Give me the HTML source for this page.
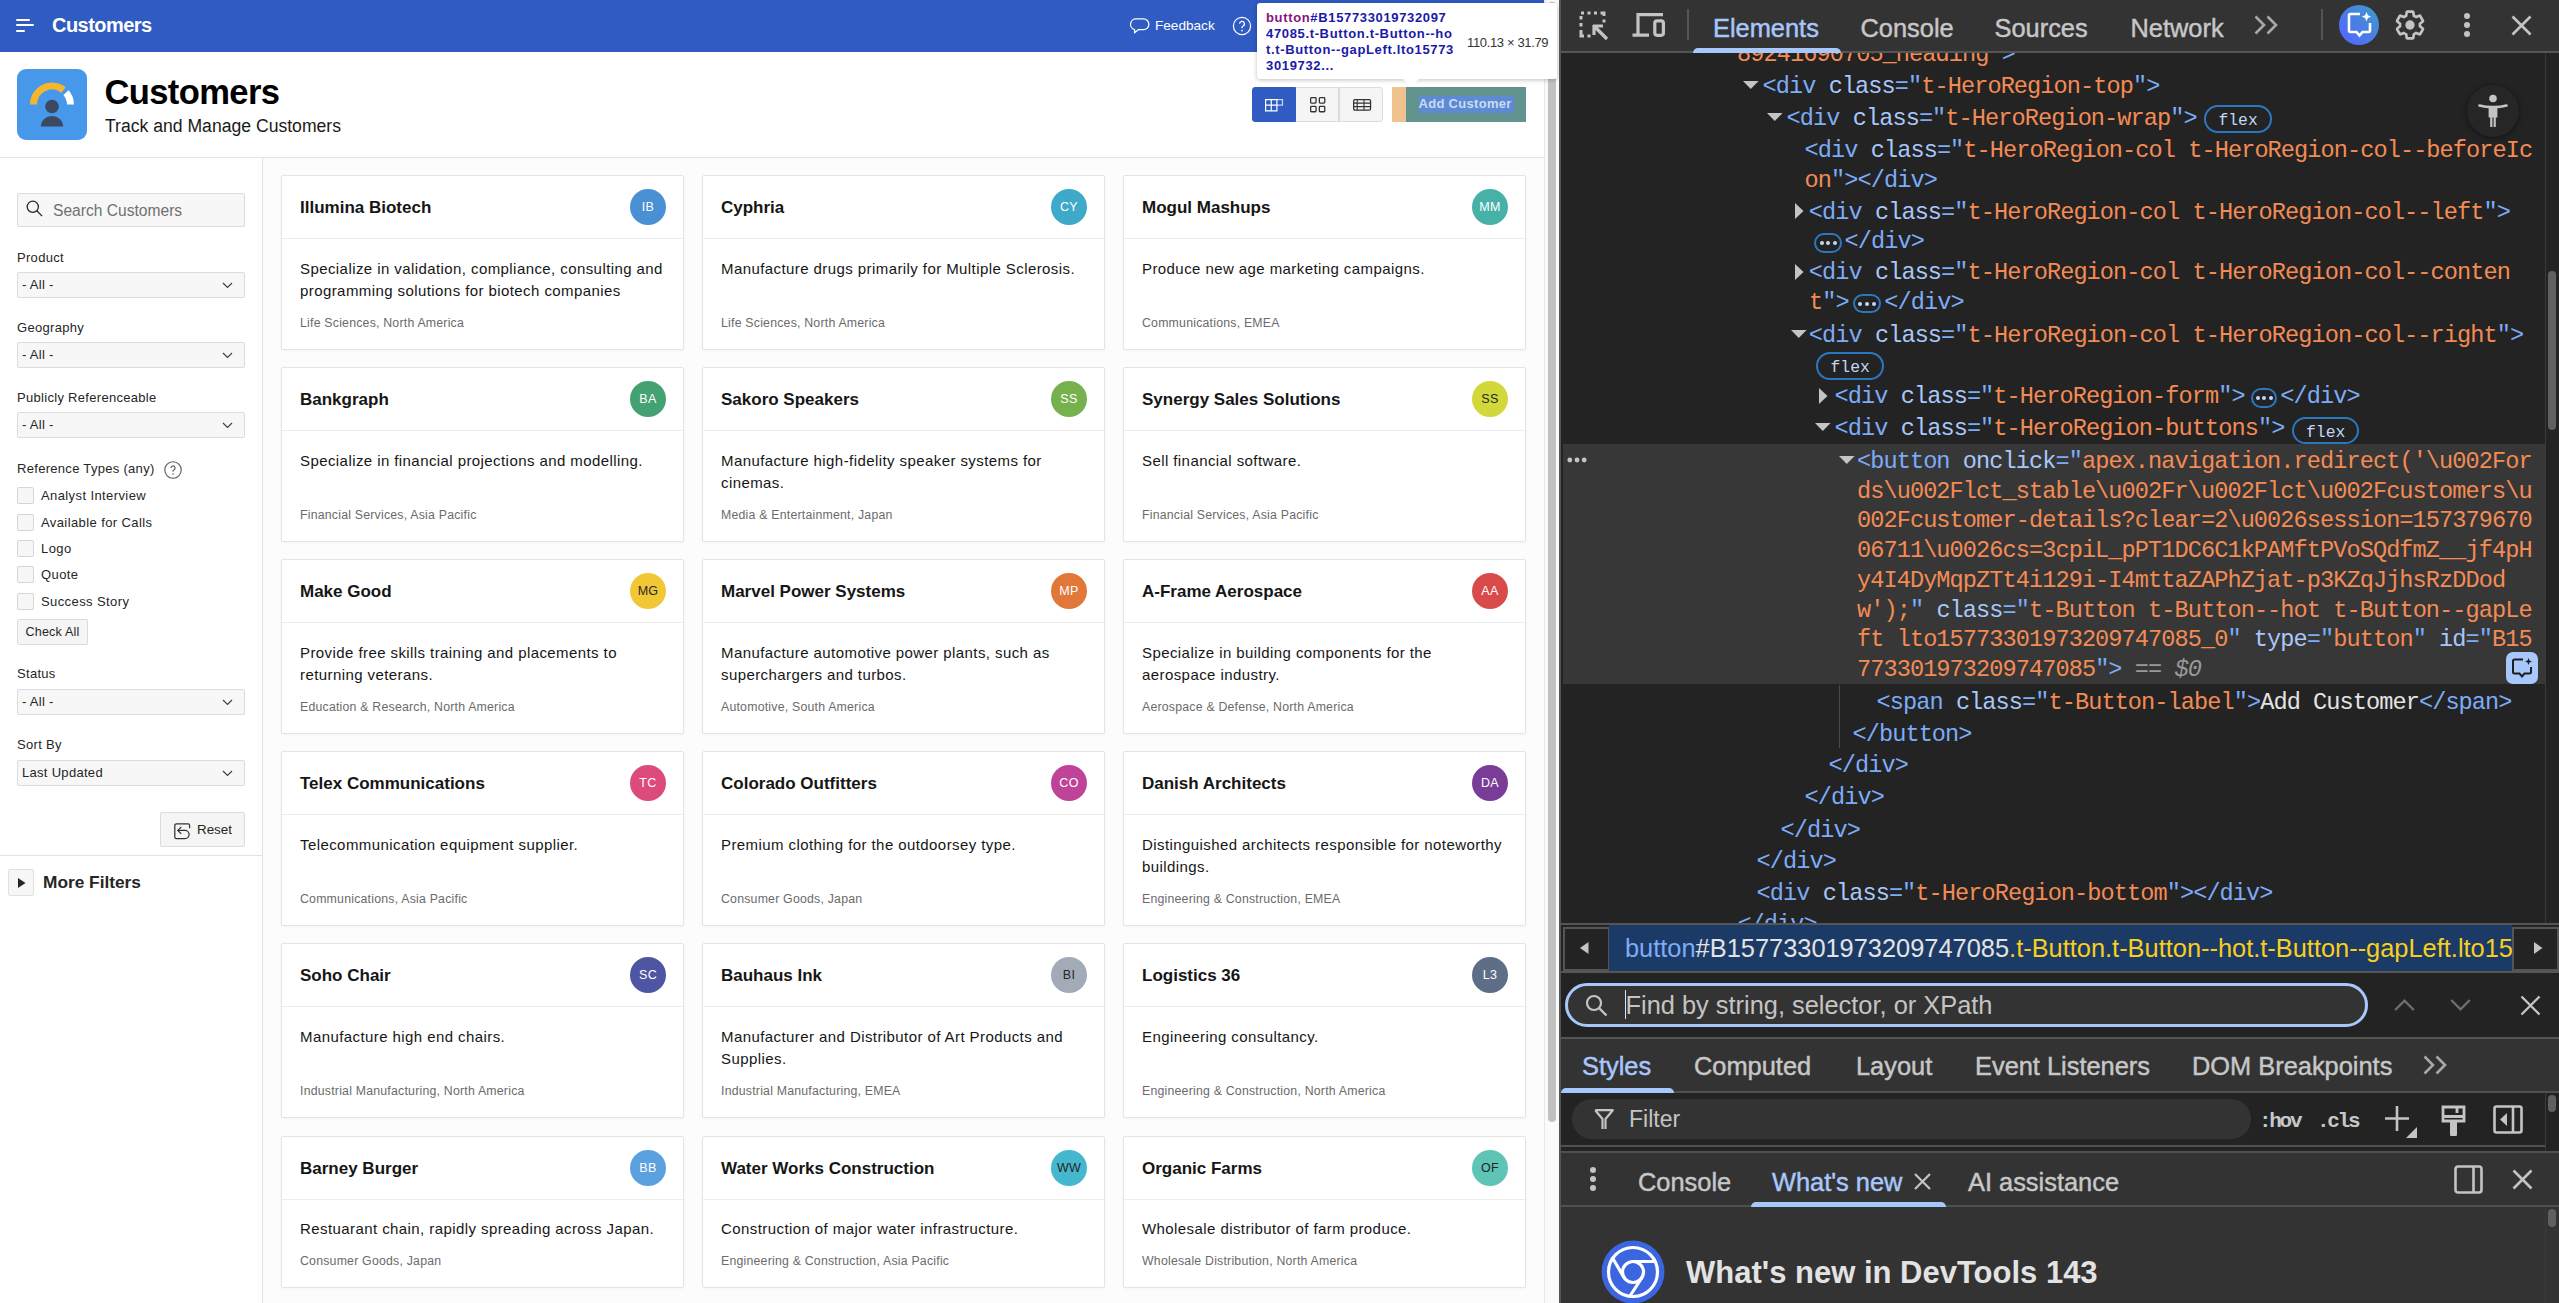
<!DOCTYPE html>
<html><head><meta charset="utf-8"><title>Customers</title>
<style>
*{box-sizing:border-box;margin:0;padding:0}
html,body{width:2559px;height:1303px;overflow:hidden;background:#fff;font-family:"Liberation Sans",sans-serif}

#page{position:absolute;left:0;top:0;width:1559px;height:1303px;overflow:hidden;background:#fff}
#hdr{position:absolute;left:0;top:0;width:1544px;height:52px;background:#2f5bc2;box-shadow:0 1px 0 #2a51ad,0 2px 3px rgba(0,0,0,.06)}
.hb{position:absolute;height:2.2px;background:#fff;border-radius:1.2px}
#htitle{position:absolute;left:52px;top:14px;font-size:20px;font-weight:700;color:#fff;line-height:22px;letter-spacing:-.55px}
#hfb{position:absolute;left:1155px;top:18px;font-size:13.6px;color:#fff;line-height:16px}
#hero{position:absolute;left:0;top:52px;width:1544px;height:106px;background:#fff;border-bottom:1px solid #e2e2e2}
#appicon{position:absolute;left:17px;top:17px;width:70px;height:71px}
#htl{position:absolute;left:104.5px;top:21px;font-size:34.6px;font-weight:700;color:#000;line-height:38px;letter-spacing:-.65px}
#hsub{position:absolute;left:105px;top:64.4px;font-size:17.6px;color:#1a1a1a;line-height:20px}
.vb{position:absolute;top:35px;height:34.5px;background:#f5f5f5;border:1px solid #dcdcdc}
#addc{position:absolute;left:1392px;top:35px;width:134px;height:34.5px}
#addm{position:absolute;left:0;top:0;width:14px;height:34.5px;background:#f0c38e}
#addp{position:absolute;left:14px;top:0;width:120px;height:34.5px;background:#62948f}
#addt{position:absolute;left:12.5px;top:9px;width:95px;height:16.5px;background:#5d8ad2;color:#c9dcf2;font-weight:700;font-size:13px;line-height:16.5px;letter-spacing:.3px;white-space:nowrap}
#tip{position:absolute;left:1257px;top:3px;width:300px;height:76px;background:#fff;border-radius:3px;box-shadow:0 1px 4px rgba(0,0,0,.25)}
#tipt{position:absolute;left:9px;top:7px;font-size:13px;font-weight:700;color:#1a1aa6;line-height:16px;letter-spacing:.65px;white-space:nowrap}
#tipd{position:absolute;left:210px;top:31.5px;font-size:13px;color:#333;line-height:15px;letter-spacing:-.35px;white-space:nowrap}
#tiparr{position:absolute;left:1401.5px;top:78px}
#side{position:absolute;left:0;top:158px;width:263px;height:1145px;background:#fff;border-right:1px solid #e2e2e2}
#srch{position:absolute;left:17px;top:193px;width:228px;height:34px;background:#f7f7f7;border:1px solid #dcdcdc;border-radius:2px}
#srch span{position:absolute;left:35px;top:8px;font-size:15.6px;color:#707070;line-height:18px}
.lbl{position:absolute;left:17px;font-size:13px;color:#262626;line-height:16px;letter-spacing:.3px;white-space:nowrap}
.sel{position:absolute;left:17px;width:228px;height:25.5px;background:#f7f7f7;border:1px solid #dcdcdc;border-radius:2px}
.sel span{position:absolute;left:4px;top:4px;font-size:13px;color:#262626;line-height:16px;letter-spacing:.3px;white-space:nowrap}
.chev{position:absolute;left:204px;top:9px}
.cbx{position:absolute;left:17px;width:17px;height:17px;background:#f7f7f7;border:1px solid #d6d6d6;border-radius:2px}
.cbl{position:absolute;left:41px;font-size:13px;color:#262626;line-height:16px;letter-spacing:.4px;white-space:nowrap}
#chkall{position:absolute;left:17px;top:619px;width:71px;height:26px;background:#f5f5f5;border:1px solid #dcdcdc;border-radius:2px;font-size:12.5px;color:#262626;line-height:24px;text-align:center;letter-spacing:.2px}
#reset{position:absolute;left:160px;top:812px;width:85px;height:35px;background:#f5f5f5;border:1px solid #dcdcdc;border-radius:2px}
#reset span{position:absolute;left:36px;top:9px;font-size:13.4px;color:#262626;line-height:16px}
#sdiv{position:absolute;left:0;top:855px;width:262px;height:1px;background:#e2e2e2}
#mftog{position:absolute;left:8px;top:869px;width:26px;height:27px;background:#f7f7f7;border:1px solid #e0e0e0;border-radius:2px}
#mft{position:absolute;left:43px;top:872px;font-size:17.3px;font-weight:700;color:#262626;line-height:20px}
#content{position:absolute;left:263px;top:158px;width:1281px;height:1145px;background:#fcfcfc}
.card{position:absolute;width:403px;background:#fff;border:1px solid #e4e4e4;border-radius:2px;box-shadow:0 1px 3px rgba(0,0,0,.035);display:flex;flex-direction:column}
.ch{position:relative;height:63px;border-bottom:1px solid #ececec}
.ct{position:absolute;left:18px;top:21.9px;font-size:17px;font-weight:700;color:#161616;line-height:20px;white-space:nowrap}
.av{position:absolute;left:348px;top:13px;width:36px;height:36px;border-radius:50%;font-size:12.5px;text-align:center;line-height:36px;letter-spacing:.3px}
.cb{flex:1;display:flex;flex-direction:column;padding:18.5px 18px 18px 18px}
.cd{font-size:15px;line-height:22px;color:#161616;letter-spacing:.42px;white-space:nowrap}
.cf{margin-top:auto;padding-top:12.7px;font-size:12.3px;line-height:16px;color:#6b6b6b;letter-spacing:.22px;white-space:nowrap}
#psb{position:absolute;left:1544px;top:0;width:15px;height:1303px;background:#fafafa;border-left:1px solid #e8e8e8}
#psbt{position:absolute;left:3px;top:2px;width:8px;height:1120px;background:#c1c1c1;border-radius:4px}


#dt{position:absolute;left:1559px;top:0;width:1000px;height:1303px;background:#232323;border-left:2px solid #555;overflow:hidden}
#dt .cl,#dt .tri,#dt .flexb,#dt .dotb{position:absolute}
#elp{position:absolute;left:0;top:53px;width:998px;height:870px;background:#232323}
#selrow{position:absolute;left:2px;top:443.8px;width:982px;height:240.6px;background:#373737}
#seldots{position:absolute;left:7px;top:457px;width:30px;height:6px;white-space:nowrap}
#seldots i,.kb i{display:inline-block;width:5.5px;height:5.5px;border-radius:50%;background:#c4c4c4;margin-right:2px}
.kb{position:absolute;width:6px}
.kb i{display:block;margin:0 0 3px 0;width:6px;height:6px}
#guide{position:absolute;left:277.7px;top:685px;width:1.5px;height:62.6px;background:#4a4a4a}
.cl{font-family:"Liberation Mono",monospace;font-size:23.6px;letter-spacing:-.93px;line-height:30px;white-space:pre;height:30px}
.flexb{height:27.6px;width:67.6px;border:2.2px solid #2b78c0;border-radius:14px;color:#c2d7f9;font-family:"Liberation Mono",monospace;font-size:16.4px;line-height:28px;text-align:center}
.dotb{height:19.5px;border:2px solid #2b78c0;border-radius:10px;text-align:center;padding-top:5.8px;white-space:nowrap;line-height:0}
.dotb i{display:inline-block;width:4px;height:4px;border-radius:50%;background:#c2d7f9;margin:0 1.3px;vertical-align:top}
#aismall{position:absolute;left:944.5px;top:651.5px;width:32px;height:32px;background:#a8c7fa;border-radius:7px}
#a11y{position:absolute;left:906px;top:85.4px;width:52px;height:52px;border-radius:50%;background:#262626;box-shadow:0 1px 5px rgba(0,0,0,.5)}
#elsbtrack{position:absolute;left:983.5px;top:53px;width:1px;height:870px;background:#3a3a3a}
#elsb{position:absolute;left:986.5px;top:271px;width:8px;height:159px;background:#606060;border-radius:4px}
#tb{position:absolute;left:0;top:0;width:998px;height:53px;background:#333;border-bottom:2.5px solid #555}
.tsep{position:absolute;top:9px;width:2px;height:31px;background:#555}
.tab{position:absolute;top:12.5px;font-size:25.4px;line-height:30px;color:#c7c7c7;white-space:nowrap;-webkit-text-stroke:.45px currentColor}
.tab.act{color:#a8c7fa}
#tbul{position:absolute;left:132px;top:48px;width:148px;height:5px;background:#a8c7fa;border-radius:5px 5px 0 0}
#aibtn{position:absolute;left:778px;top:5px;width:40px;height:40px;border-radius:50%;background:linear-gradient(45deg,#4f6ef7 20%,#3f9cc4 100%)}
#bc{position:absolute;left:0;top:923px;width:998px;height:50px;background:#232323;border-top:2px solid #555;border-bottom:2px solid #555}
.bcbtn{position:absolute;top:2px;width:47px;height:44px;background:#232323;border:2px solid #555}
#bcsel{position:absolute;left:48px;top:0;width:903px;height:46px;background:#1c3a66;overflow:hidden;white-space:nowrap;font-size:25.4px;line-height:46px;padding-left:16px}
#sb{position:absolute;left:0;top:973px;width:998px;height:66px;background:#232323;border-bottom:2px solid #555}
#sbpill{position:absolute;left:3.5px;top:9.6px;width:803px;height:44.6px;border:3.5px solid #a8c7fa;border-radius:23px;background:#333}
#sbpill span{position:absolute;left:58px;top:4.3px;font-size:25.4px;line-height:30px;color:#c4c4c4;white-space:nowrap}
#caret{position:absolute;left:57px;top:4px;width:1.5px;height:29px;background:#e3e3e3}
#st{position:absolute;left:0;top:1039px;width:998px;height:54px;background:#333;border-bottom:2px solid #505050}
#stul{position:absolute;left:0;top:49px;width:112.5px;height:5px;background:#a8c7fa;border-radius:5px 5px 0 0}
#fb{position:absolute;left:0;top:1093px;width:998px;height:60px;background:#232323}
#fb:before{content:"";position:absolute;left:0;top:51.5px;width:984px;height:2px;background:#505050}
#fb:after{content:"";position:absolute;left:0;top:58px;width:998px;height:2px;background:#505050}
#fpill{position:absolute;left:11px;top:6px;width:679px;height:40px;border-radius:20px;background:#333}
#fpill span{position:absolute;left:57px;top:5px;font-size:23px;line-height:30px;color:#c4c4c4}
.fbt{position:absolute;top:15.5px;font-family:"Liberation Mono",monospace;font-weight:700;font-size:21px;line-height:26px;color:#c7c7c7;letter-spacing:-2.3px}
#fsbtrack{position:absolute;left:983.5px;top:0;width:1px;height:58px;background:#3a3a3a}
#fsb{position:absolute;left:987px;top:1.5px;width:8px;height:17px;background:#606060;border-radius:4px}
#dr{position:absolute;left:0;top:1153px;width:998px;height:54px;background:#333;border-bottom:2px solid #505050}
#drul{position:absolute;left:190px;top:49px;width:195px;height:5px;background:#a8c7fa;border-radius:5px 5px 0 0}
#wn{position:absolute;left:0;top:1207px;width:998px;height:96px;background:#333}
#wnt{position:absolute;left:125px;top:47.8px;font-size:31px;font-weight:700;color:#e3e3e3;line-height:36px;white-space:nowrap}
#wnsbtrack{position:absolute;left:983.5px;top:0;width:1px;height:96px;background:#3a3a3a}
#wnsb{position:absolute;left:987px;top:2px;width:8px;height:18px;background:#606060;border-radius:4px}

</style></head><body>
<div id="page">
<div id="hdr">
<div class="hb" style="left:16px;top:19px;width:14px"></div>
<div class="hb" style="left:16px;top:24px;width:18px"></div>
<div class="hb" style="left:16px;top:30px;width:9px"></div>
<div id="htitle">Customers</div>
<svg style="position:absolute;left:1130px;top:18px" width="20" height="16" viewBox="0 0 20 16"><path d="M6.5 .9h7a5.4 5.4 0 0 1 0 10.8H8.3L4.6 14.8V11.5A5.4 5.4 0 0 1 6.5 .9z" fill="none" stroke="#fff" stroke-width="1.25" stroke-linejoin="round"/></svg>
<div id="hfb">Feedback</div>
<svg style="position:absolute;left:1232px;top:15.5px" width="20" height="20" viewBox="0 0 20 20"><circle cx="10" cy="10" r="8.6" fill="none" stroke="#fff" stroke-width="1.2"/><path d="M7.6 7.8a2.4 2.4 0 1 1 3.4 2.2c-.7.4-1 .8-1 1.6v.6" fill="none" stroke="#fff" stroke-width="1.3"/><circle cx="10" cy="14.6" r=".9" fill="#fff"/></svg>
</div>
<div id="hero">
<div id="appicon"><svg width="70" height="71" viewBox="0 0 70 71">
<rect x="0" y="0" width="70" height="71" rx="9" fill="#4797ea"/>
<path d="M16.5 35.5A18.5 18.5 0 0 1 46.5 21" fill="none" stroke="#f4b72c" stroke-width="7"/>
<path d="M49 23.6A18.5 18.5 0 0 1 53.5 35.5" fill="none" stroke="#fff" stroke-width="7"/>
<circle cx="35" cy="37.5" r="6.8" fill="#3b4a62"/>
<path d="M24 57.5a11 10.5 0 0 1 22 0z" fill="#3b4a62"/>
</svg></div>
<div id="htl">Customers</div>
<div id="hsub">Track and Manage Customers</div>
<div class="vb" style="left:1252px;background:#2f5bc2;border-color:#2f5bc2;border-radius:3px 0 0 3px;width:44px">
<svg width="19" height="13" viewBox="0 0 19 13" style="position:absolute;left:12px;top:11px"><path d="M.6.6h11.3v11.2H.6z M.6 6.2h11.3 M6.25.6v11.2" fill="none" stroke="#fff" stroke-width="1.2"/><path d="M11.9.6h5.6v5.6h-5.6" fill="none" stroke="#fff" stroke-opacity=".75" stroke-width="1.2"/></svg></div>
<div class="vb" style="left:1295.5px;width:43.5px;border-left:none">
<svg width="16" height="16" viewBox="0 0 16 16" style="position:absolute;left:14px;top:9px"><rect x=".65" y=".65" width="5.4" height="5.4" rx=".8" fill="none" stroke="#333" stroke-width="1.3"/><rect x="9.35" y=".65" width="5.4" height="5.4" rx=".8" fill="none" stroke="#333" stroke-width="1.3"/><rect x=".65" y="9.35" width="5.4" height="5.4" rx=".8" fill="none" stroke="#333" stroke-width="1.3"/><rect x="9.35" y="9.35" width="5.4" height="5.4" rx=".8" fill="none" stroke="#333" stroke-width="1.3"/></svg></div>
<div class="vb" style="left:1338.5px;width:44px;border-radius:0 3px 3px 0">
<svg width="19" height="12" viewBox="0 0 19 12" style="position:absolute;left:13.3px;top:11px"><rect x=".65" y=".65" width="16.9" height="10.5" rx="1.3" fill="none" stroke="#333" stroke-width="1.3"/><path d="M.65 4.1h16.9M.65 7.6h16.9M4.2.65v10.5M11 .65v10.5" fill="none" stroke="#333" stroke-width="1.1"/></svg></div>
<div id="addc"><div id="addm"></div><div id="addp"><div id="addt">Add Customer</div></div></div>
</div>
<div id="side"></div>
<div id="srch"><svg width="17" height="17" viewBox="0 0 17 17" style="position:absolute;left:8px;top:6px"><circle cx="6.8" cy="6.8" r="5.6" fill="none" stroke="#262626" stroke-width="1.3"/><path d="M10.8 10.8l5.3 5.3" stroke="#262626" stroke-width="1.3"/></svg><span>Search Customers</span></div>
<div class="lbl" style="top:250px">Product</div>
<div class="sel" style="top:272px"><span>- All -</span><svg class="chev" width="11" height="7" viewBox="0 0 11 7"><path d="M1 1l4.5 4.5L10 1" fill="none" stroke="#404040" stroke-width="1.2"/></svg></div>
<div class="lbl" style="top:320px">Geography</div>
<div class="sel" style="top:342px"><span>- All -</span><svg class="chev" width="11" height="7" viewBox="0 0 11 7"><path d="M1 1l4.5 4.5L10 1" fill="none" stroke="#404040" stroke-width="1.2"/></svg></div>
<div class="lbl" style="top:390px">Publicly Referenceable</div>
<div class="sel" style="top:412px"><span>- All -</span><svg class="chev" width="11" height="7" viewBox="0 0 11 7"><path d="M1 1l4.5 4.5L10 1" fill="none" stroke="#404040" stroke-width="1.2"/></svg></div>
<div class="lbl" style="top:461px">Reference Types (any)</div>
<svg style="position:absolute;left:164px;top:461px" width="18" height="18" viewBox="0 0 18 18"><circle cx="9" cy="9" r="8.2" fill="none" stroke="#555" stroke-width="1.1"/><path d="M6.9 7a2.1 2.1 0 1 1 3 1.9c-.6.3-.9.7-.9 1.3v.6" fill="none" stroke="#555" stroke-width="1.1"/><circle cx="9" cy="12.9" r=".75" fill="#555"/></svg>
<div class="cbx" style="top:487px"></div><div class="cbl" style="top:488px">Analyst Interview</div>
<div class="cbx" style="top:514px"></div><div class="cbl" style="top:515px">Available for Calls</div>
<div class="cbx" style="top:540px"></div><div class="cbl" style="top:541px">Logo</div>
<div class="cbx" style="top:566px"></div><div class="cbl" style="top:567px">Quote</div>
<div class="cbx" style="top:593px"></div><div class="cbl" style="top:594px">Success Story</div>
<div id="chkall">Check All</div>
<div class="lbl" style="top:666px">Status</div>
<div class="sel" style="top:689px"><span>- All -</span><svg class="chev" width="11" height="7" viewBox="0 0 11 7"><path d="M1 1l4.5 4.5L10 1" fill="none" stroke="#404040" stroke-width="1.2"/></svg></div>
<div class="lbl" style="top:737px">Sort By</div>
<div class="sel" style="top:760px"><span>Last Updated</span><svg class="chev" width="11" height="7" viewBox="0 0 11 7"><path d="M1 1l4.5 4.5L10 1" fill="none" stroke="#404040" stroke-width="1.2"/></svg></div>
<div id="reset"><svg width="18" height="18" viewBox="0 0 18 18" style="position:absolute;left:13px;top:10px"><path d="M15.6 5.2V2.4a1.6 1.6 0 0 0-1.6-1.6H2.4A1.6 1.6 0 0 0 .8 2.4v11.6a1.6 1.6 0 0 0 1.6 1.6h8.6a4.1 4.1 0 0 0 0-8.2H4" fill="none" stroke="#333" stroke-width="1.25"/><path d="M7.3 3.9L3.8 7.4l3.5 3.5" fill="none" stroke="#333" stroke-width="1.25"/></svg><span>Reset</span></div>
<div id="sdiv"></div>
<div id="mftog"><svg width="8" height="10" viewBox="0 0 8 10" style="position:absolute;left:9px;top:8px"><path d="M0 0l7.5 5L0 10z" fill="#262626"/></svg></div><div id="mft">More Filters</div>
<div id="content"></div>
<div class="card" style="left:281px;top:175px;height:175px"><div class="ch"><div class="ct">Illumina Biotech</div><div class="av" style="background:#4a90d4;color:#fff">IB</div></div><div class="cb"><div class="cd">Specialize in validation, compliance, consulting and<br>programming solutions for biotech companies</div><div class="cf">Life Sciences, North America</div></div></div>
<div class="card" style="left:702px;top:175px;height:175px"><div class="ch"><div class="ct">Cyphria</div><div class="av" style="background:#3fa9c9;color:#fff">CY</div></div><div class="cb"><div class="cd">Manufacture drugs primarily for Multiple Sclerosis.</div><div class="cf">Life Sciences, North America</div></div></div>
<div class="card" style="left:1123px;top:175px;height:175px"><div class="ch"><div class="ct">Mogul Mashups</div><div class="av" style="background:#47b1a8;color:#fff">MM</div></div><div class="cb"><div class="cd">Produce new age marketing campaigns.</div><div class="cf">Communications, EMEA</div></div></div>
<div class="card" style="left:281px;top:367px;height:175px"><div class="ch"><div class="ct">Bankgraph</div><div class="av" style="background:#44a172;color:#fff">BA</div></div><div class="cb"><div class="cd">Specialize in financial projections and modelling.</div><div class="cf">Financial Services, Asia Pacific</div></div></div>
<div class="card" style="left:702px;top:367px;height:175px"><div class="ch"><div class="ct">Sakoro Speakers</div><div class="av" style="background:#77b14e;color:#fff">SS</div></div><div class="cb"><div class="cd">Manufacture high-fidelity speaker systems for<br>cinemas.</div><div class="cf">Media &amp; Entertainment, Japan</div></div></div>
<div class="card" style="left:1123px;top:367px;height:175px"><div class="ch"><div class="ct">Synergy Sales Solutions</div><div class="av" style="background:#d3d83a;color:#262626">SS</div></div><div class="cb"><div class="cd">Sell financial software.</div><div class="cf">Financial Services, Asia Pacific</div></div></div>
<div class="card" style="left:281px;top:559px;height:175px"><div class="ch"><div class="ct">Make Good</div><div class="av" style="background:#f2c736;color:#262626">MG</div></div><div class="cb"><div class="cd">Provide free skills training and placements to<br>returning veterans.</div><div class="cf">Education &amp; Research, North America</div></div></div>
<div class="card" style="left:702px;top:559px;height:175px"><div class="ch"><div class="ct">Marvel Power Systems</div><div class="av" style="background:#e2773a;color:#fff">MP</div></div><div class="cb"><div class="cd">Manufacture automotive power plants, such as<br>superchargers and turbos.</div><div class="cf">Automotive, South America</div></div></div>
<div class="card" style="left:1123px;top:559px;height:175px"><div class="ch"><div class="ct">A-Frame Aerospace</div><div class="av" style="background:#d94b4b;color:#fff">AA</div></div><div class="cb"><div class="cd">Specialize in building components for the<br>aerospace industry.</div><div class="cf">Aerospace &amp; Defense, North America</div></div></div>
<div class="card" style="left:281px;top:751px;height:175px"><div class="ch"><div class="ct">Telex Communications</div><div class="av" style="background:#dd4a7c;color:#fff">TC</div></div><div class="cb"><div class="cd">Telecommunication equipment supplier.</div><div class="cf">Communications, Asia Pacific</div></div></div>
<div class="card" style="left:702px;top:751px;height:175px"><div class="ch"><div class="ct">Colorado Outfitters</div><div class="av" style="background:#bf4399;color:#fff">CO</div></div><div class="cb"><div class="cd">Premium clothing for the outdoorsey type.</div><div class="cf">Consumer Goods, Japan</div></div></div>
<div class="card" style="left:1123px;top:751px;height:175px"><div class="ch"><div class="ct">Danish Architects</div><div class="av" style="background:#7a3d97;color:#fff">DA</div></div><div class="cb"><div class="cd">Distinguished architects responsible for noteworthy<br>buildings.</div><div class="cf">Engineering &amp; Construction, EMEA</div></div></div>
<div class="card" style="left:281px;top:943px;height:175px"><div class="ch"><div class="ct">Soho Chair</div><div class="av" style="background:#4e55a3;color:#fff">SC</div></div><div class="cb"><div class="cd">Manufacture high end chairs.</div><div class="cf">Industrial Manufacturing, North America</div></div></div>
<div class="card" style="left:702px;top:943px;height:175px"><div class="ch"><div class="ct">Bauhaus Ink</div><div class="av" style="background:#a3abb8;color:#262626">BI</div></div><div class="cb"><div class="cd">Manufacturer and Distributor of Art Products and<br>Supplies.</div><div class="cf">Industrial Manufacturing, EMEA</div></div></div>
<div class="card" style="left:1123px;top:943px;height:175px"><div class="ch"><div class="ct">Logistics 36</div><div class="av" style="background:#5d6e86;color:#fff">L3</div></div><div class="cb"><div class="cd">Engineering consultancy.</div><div class="cf">Engineering &amp; Construction, North America</div></div></div>
<div class="card" style="left:281px;top:1136px;height:152px"><div class="ch"><div class="ct">Barney Burger</div><div class="av" style="background:#5aa1e0;color:#fff">BB</div></div><div class="cb"><div class="cd">Restuarant chain, rapidly spreading across Japan.</div><div class="cf">Consumer Goods, Japan</div></div></div>
<div class="card" style="left:702px;top:1136px;height:152px"><div class="ch"><div class="ct">Water Works Construction</div><div class="av" style="background:#45b7cf;color:#262626">WW</div></div><div class="cb"><div class="cd">Construction of major water infrastructure.</div><div class="cf">Engineering &amp; Construction, Asia Pacific</div></div></div>
<div class="card" style="left:1123px;top:1136px;height:152px"><div class="ch"><div class="ct">Organic Farms</div><div class="av" style="background:#5ec4b6;color:#262626">OF</div></div><div class="cb"><div class="cd">Wholesale distributor of farm produce.</div><div class="cf">Wholesale Distribution, North America</div></div></div>
<div id="psb"><div id="psbt"></div></div>
<div id="tip"><div id="tipt"><span style="color:#881280">button</span>#B157733019732097<br>47085.t-Button.t-Button--ho<br>t.t-Button--gapLeft.lto15773<br>3019732...</div><div id="tipd">110.13 × 31.79</div></div>
<svg id="tiparr" width="18" height="9" viewBox="0 0 18 9"><path d="M0 0L9 8.5L18 0z" fill="#fff"/></svg>
</div>
<div id="dt">
<div id="elp"></div>
<div id="selrow"></div>
<svg style="position:absolute;left:6px;top:457px" width="22" height="6" viewBox="0 0 22 6"><circle cx="2.8" cy="3" r="2.4" fill="#c4c4c4"/><circle cx="10" cy="3" r="2.4" fill="#c4c4c4"/><circle cx="17.2" cy="3" r="2.4" fill="#c4c4c4"/></svg>
<div id="guide"></div>
<div class="cl" style="left:176.1px;top:40.20px"><span style="color:#f38b55">89241690705_heading</span><span style="color:#7cacf8">&quot;&gt;</span></div>
<div class="cl" style="left:201.5px;top:71.80px"><span style="color:#7cacf8">&lt;div</span><span style="color:#a8c7fa"> class</span><span style="color:#7cacf8">=&quot;</span><span style="color:#f38b55">t-HeroRegion-top</span><span style="color:#7cacf8">&quot;</span><span style="color:#7cacf8">&gt;</span></div>
<svg class="tri" style="left:182.1px;top:80.8px" width="16" height="9" viewBox="0 0 16 9"><path d="M0 0h15.6L7.8 8z" fill="#c4c4c4"/></svg>
<div class="cl" style="left:225.6px;top:103.70px"><span style="color:#7cacf8">&lt;div</span><span style="color:#a8c7fa"> class</span><span style="color:#7cacf8">=&quot;</span><span style="color:#f38b55">t-HeroRegion-wrap</span><span style="color:#7cacf8">&quot;</span><span style="color:#7cacf8">&gt;</span></div>
<svg class="tri" style="left:206.1px;top:112.7px" width="16" height="9" viewBox="0 0 16 9"><path d="M0 0h15.6L7.8 8z" fill="#c4c4c4"/></svg>
<div class="cl" style="left:243.6px;top:136.00px"><span style="color:#7cacf8">&lt;div</span><span style="color:#a8c7fa"> class</span><span style="color:#7cacf8">=&quot;</span><span style="color:#f38b55">t-HeroRegion-col t-HeroRegion-col--beforeIc</span></div>
<div class="cl" style="left:243.6px;top:165.50px"><span style="color:#f38b55">on</span><span style="color:#7cacf8">&quot;&gt;&lt;/div&gt;</span></div>
<div class="cl" style="left:247.8px;top:197.70px"><span style="color:#7cacf8">&lt;div</span><span style="color:#a8c7fa"> class</span><span style="color:#7cacf8">=&quot;</span><span style="color:#f38b55">t-HeroRegion-col t-HeroRegion-col--left</span><span style="color:#7cacf8">&quot;</span><span style="color:#7cacf8">&gt;</span></div>
<svg class="tri" style="left:233.9px;top:203.0px" width="9" height="17" viewBox="0 0 9 17"><path d="M0 0l8.5 8L0 16z" fill="#c4c4c4"/></svg>
<div class="cl" style="left:283.6px;top:226.90px"><span style="color:#7cacf8">&lt;/div&gt;</span></div>
<div class="cl" style="left:247.8px;top:258.40px"><span style="color:#7cacf8">&lt;div</span><span style="color:#a8c7fa"> class</span><span style="color:#7cacf8">=&quot;</span><span style="color:#f38b55">t-HeroRegion-col t-HeroRegion-col--conten</span></div>
<svg class="tri" style="left:233.9px;top:263.7px" width="9" height="17" viewBox="0 0 9 17"><path d="M0 0l8.5 8L0 16z" fill="#c4c4c4"/></svg>
<div class="cl" style="left:248.1px;top:288.30px"><span style="color:#f38b55">t</span><span style="color:#7cacf8">&quot;&gt;</span></div>
<div class="cl" style="left:323.3px;top:288.30px"><span style="color:#7cacf8">&lt;/div&gt;</span></div>
<div class="cl" style="left:247.8px;top:321.00px"><span style="color:#7cacf8">&lt;div</span><span style="color:#a8c7fa"> class</span><span style="color:#7cacf8">=&quot;</span><span style="color:#f38b55">t-HeroRegion-col t-HeroRegion-col--right</span><span style="color:#7cacf8">&quot;</span><span style="color:#7cacf8">&gt;</span></div>
<svg class="tri" style="left:230.2px;top:330.0px" width="16" height="9" viewBox="0 0 16 9"><path d="M0 0h15.6L7.8 8z" fill="#c4c4c4"/></svg>
<div class="cl" style="left:273.6px;top:382.40px"><span style="color:#7cacf8">&lt;div</span><span style="color:#a8c7fa"> class</span><span style="color:#7cacf8">=&quot;</span><span style="color:#f38b55">t-HeroRegion-form</span><span style="color:#7cacf8">&quot;</span><span style="color:#7cacf8">&gt;</span></div>
<svg class="tri" style="left:257.9px;top:387.7px" width="9" height="17" viewBox="0 0 9 17"><path d="M0 0l8.5 8L0 16z" fill="#c4c4c4"/></svg>
<div class="cl" style="left:719.3px;top:382.40px"><span style="color:#7cacf8">&lt;/div&gt;</span></div>
<div class="cl" style="left:273.6px;top:413.80px"><span style="color:#7cacf8">&lt;div</span><span style="color:#a8c7fa"> class</span><span style="color:#7cacf8">=&quot;</span><span style="color:#f38b55">t-HeroRegion-buttons</span><span style="color:#7cacf8">&quot;</span><span style="color:#7cacf8">&gt;</span></div>
<svg class="tri" style="left:254.3px;top:422.8px" width="16" height="9" viewBox="0 0 16 9"><path d="M0 0h15.6L7.8 8z" fill="#c4c4c4"/></svg>
<div class="cl" style="left:296.0px;top:446.80px"><span style="color:#7cacf8">&lt;button</span><span style="color:#a8c7fa"> onclick</span><span style="color:#7cacf8">=&quot;</span><span style="color:#f38b55">apex.navigation.redirect(&#x27;\u002For</span></div>
<svg class="tri" style="left:278.1px;top:455.8px" width="16" height="9" viewBox="0 0 16 9"><path d="M0 0h15.6L7.8 8z" fill="#c4c4c4"/></svg>
<div class="cl" style="left:296.0px;top:476.70px"><span style="color:#f38b55">ds\u002Flct_stable\u002Fr\u002Flct\u002Fcustomers\u</span></div>
<div class="cl" style="left:296.0px;top:506.30px"><span style="color:#f38b55">002Fcustomer-details?clear=2\u0026session=157379670</span></div>
<div class="cl" style="left:296.0px;top:536.30px"><span style="color:#f38b55">06711\u0026cs=3cpiL_pPT1DC6C1kPAMftPVoSQdfmZ__jf4pH</span></div>
<div class="cl" style="left:296.0px;top:566.20px"><span style="color:#f38b55">y4I4DyMqpZTt4i129i-I4mttaZAPhZjat-p3KZqJjhsRzDDod</span></div>
<div class="cl" style="left:296.0px;top:596.10px"><span style="color:#f38b55">w&#x27;);</span><span style="color:#7cacf8">&quot;</span><span style="color:#a8c7fa"> class</span><span style="color:#7cacf8">=&quot;</span><span style="color:#f38b55">t-Button t-Button--hot t-Button--gapLe</span></div>
<div class="cl" style="left:296.0px;top:625.30px"><span style="color:#f38b55">ft lto15773301973209747085_0</span><span style="color:#7cacf8">&quot;</span><span style="color:#a8c7fa"> type</span><span style="color:#7cacf8">=&quot;</span><span style="color:#f38b55">button</span><span style="color:#7cacf8">&quot;</span><span style="color:#a8c7fa"> id</span><span style="color:#7cacf8">=&quot;</span><span style="color:#f38b55">B15</span></div>
<div class="cl" style="left:296.0px;top:655.20px"><span style="color:#f38b55">773301973209747085</span><span style="color:#7cacf8">&quot;&gt;</span><span style="color:#9a9a9a"> == </span><span style="color:#9a9a9a;font-style:italic">$0</span></div>
<div class="cl" style="left:315.5px;top:687.70px"><span style="color:#7cacf8">&lt;span</span><span style="color:#a8c7fa"> class</span><span style="color:#7cacf8">=&quot;</span><span style="color:#f38b55">t-Button-label</span><span style="color:#7cacf8">&quot;</span><span style="color:#7cacf8">&gt;</span><span style="color:#e3e3e3">Add Customer</span><span style="color:#7cacf8">&lt;/span&gt;</span></div>
<div class="cl" style="left:291.5px;top:719.50px"><span style="color:#7cacf8">&lt;/button&gt;</span></div>
<div class="cl" style="left:267.6px;top:751.20px"><span style="color:#7cacf8">&lt;/div&gt;</span></div>
<div class="cl" style="left:243.6px;top:783.20px"><span style="color:#7cacf8">&lt;/div&gt;</span></div>
<div class="cl" style="left:219.6px;top:815.50px"><span style="color:#7cacf8">&lt;/div&gt;</span></div>
<div class="cl" style="left:195.6px;top:847.10px"><span style="color:#7cacf8">&lt;/div&gt;</span></div>
<div class="cl" style="left:195.6px;top:879.40px"><span style="color:#7cacf8">&lt;div</span><span style="color:#a8c7fa"> class</span><span style="color:#7cacf8">=&quot;</span><span style="color:#f38b55">t-HeroRegion-bottom</span><span style="color:#7cacf8">&quot;&gt;&lt;/div&gt;</span></div>
<div class="cl" style="left:176.4px;top:909.70px"><span style="color:#7cacf8">&lt;/div&gt;</span></div>
<div class="flexb" style="left:643.3px;top:105px">flex</div>
<div class="flexb" style="left:255.4px;top:352.2px">flex</div>
<div class="flexb" style="left:730.9px;top:416.8px">flex</div>
<div class="dotb" style="left:253.3px;top:233.1px;width:27.6px"><i></i><i></i><i></i></div>
<div class="dotb" style="left:292.2px;top:293.9px;width:27.7px"><i></i><i></i><i></i></div>
<div class="dotb" style="left:689.9px;top:388.2px;width:26.5px"><i></i><i></i><i></i></div>
<div id="aismall"><svg width="24" height="24" viewBox="0 0 24 24" style="position:absolute;left:4px;top:4px"><path d="M13 3.5H4.5a1.5 1.5 0 0 0-1.5 1.5v11a1.5 1.5 0 0 0 1.5 1.5h5l2.5 3 2.5-3h5a1.5 1.5 0 0 0 1.5-1.5V11" fill="none" stroke="#1f1f1f" stroke-width="2"/><path d="M18.5 2l1 2.5 2.5 1-2.5 1-1 2.5-1-2.5-2.5-1 2.5-1z" fill="#1f1f1f"/></svg></div>
<div id="a11y"><svg width="30" height="34" viewBox="0 0 30 34" style="position:absolute;left:11px;top:9px"><circle cx="15" cy="4.5" r="3.8" fill="#c4c4c4"/><path d="M1.5 11.5c4 1.2 8.5 1.6 13.5 1.6s9.5-.4 13.5-1.6" fill="none" stroke="#c4c4c4" stroke-width="2.6" stroke-linecap="round"/><path d="M10.6 12.8h8.8v10.6h-1.6V33h-2.2v-9.6h-1.2V33h-2.2V23.4h-1.6z" fill="#c4c4c4"/></svg></div>
<div id="elsbtrack"></div><div id="elsb"></div>
<div id="tb">
<svg style="position:absolute;left:18px;top:11px" width="30" height="30" viewBox="0 0 30 30"><path d="M2 2h3M8.5 2h3M15 2h3M21.5 2h3.5v3M25 8.5v3M2 5v3.5M2 12v3.5M2 19v3.5v2.5h3M8.5 25h3" fill="none" stroke="#c4c4c4" stroke-width="3"/><path d="M28 28L15 15M14 15h10M15 14v10" fill="none" stroke="#c4c4c4" stroke-width="3.2"/></svg>
<svg style="position:absolute;left:71px;top:12px" width="35" height="28" viewBox="0 0 35 28"><path d="M6 2.6h25M6 1v22.6M.5 23.2h16.5" fill="none" stroke="#c4c4c4" stroke-width="3.2"/><rect x="22.8" y="8.9" width="8.6" height="14.4" rx="2.2" fill="none" stroke="#c4c4c4" stroke-width="3.2"/></svg>
<div class="tsep" style="left:126px"></div>
<div class="tab act" style="left:152px">Elements</div>
<div id="tbul"></div>
<div class="tab" style="left:299.5px">Console</div>
<div class="tab" style="left:433.5px">Sources</div>
<div class="tab" style="left:569.5px">Network</div>
<svg style="position:absolute;left:693px;top:15px" width="25" height="20" viewBox="0 0 25 20"><path d="M1.5 1.5l8.5 8.5l-8.5 8.5M13.5 1.5l8.5 8.5l-8.5 8.5" fill="none" stroke="#a8a8a8" stroke-width="2.6"/></svg>
<div class="tsep" style="left:760px"></div>
<div id="aibtn"><svg width="26" height="26" viewBox="0 0 26 26" style="position:absolute;left:8px;top:7px"><path d="M13 2H3.5a1.5 1.5 0 0 0-1.5 1.5v15a1.5 1.5 0 0 0 1.5 1.5h6l3 3.5 3-3.5h6a1.5 1.5 0 0 0 1.5-1.5V11" fill="none" stroke="#fff" stroke-width="2.6"/><path d="M19.5 0l1.4 3.3 3.3 1.4-3.3 1.4-1.4 3.3-1.4-3.3-3.3-1.4 3.3-1.4z" fill="#fff"/></svg></div>
<svg style="position:absolute;left:833px;top:9px" width="32" height="32" viewBox="0 0 24 24"><path d="M19.43 12.98c.04-.32.07-.64.07-.98 0-.34-.03-.66-.07-.98l2.11-1.65c.19-.15.24-.42.12-.64l-2-3.46a.5.5 0 0 0-.61-.22l-2.49 1c-.52-.4-1.08-.73-1.69-.98l-.38-2.65A.49.49 0 0 0 14 2h-4c-.25 0-.46.18-.49.42l-.38 2.65c-.61.25-1.170.59-1.69.98l-2.49-1a.5.5 0 0 0-.61.22l-2 3.46c-.13.22-.07.49.12.64l2.11 1.65c-.04.32-.07.65-.07.98s.03.66.07.98l-2.11 1.65c-.19.15-.24.42-.12.64l2 3.46c.12.22.39.3.61.22l2.490-1c.52.4 1.08.73 1.69.98l.38 2.65c.03.24.24.42.49.42h4c.25 0 .46-.18.49-.42l.38-2.65c.61-.25 1.17-.59 1.69-.98l2.49 1c.23.09.49 0 .61-.22l2-3.46c.12-.22.07-.49-.12-.64l-2.11-1.65z" fill="none" stroke="#c4c4c4" stroke-width="2" stroke-linejoin="round"/><circle cx="12" cy="12" r="3.5" fill="#c4c4c4"/></svg>
<div class="kb" style="left:903px;top:13px"><i></i><i></i><i></i></div>
<svg style="position:absolute;left:949.5px;top:15px" width="21" height="21" viewBox="0 0 21 21"><path d="M1.5 1.5l18 18M19.5 1.5l-18 18" stroke="#c4c4c4" stroke-width="2.6"/></svg>
</div>
<div id="bc">
<div class="bcbtn" style="left:2px"><svg width="9" height="12" viewBox="0 0 9 12" style="position:absolute;left:15px;top:13px"><path d="M8.5 0v12L0 6z" fill="#c4c4c4"/></svg></div>
<div id="bcsel"><span style="color:#7cacf8">button</span><span style="color:#e3e3e3">#B15773301973209747085</span><span style="color:#f9cf1c">.t-Button.t-Button--hot.t-Button--gapLeft.lto15773301973209747085_0</span></div>
<div class="bcbtn" style="left:951px"><svg width="9" height="12" viewBox="0 0 9 12" style="position:absolute;left:20px;top:13px"><path d="M0 0v12L8.5 6z" fill="#c4c4c4"/></svg></div>
</div>
<div id="sb">
<div id="sbpill"><svg width="23" height="23" viewBox="0 0 23 23" style="position:absolute;left:17px;top:8px"><circle cx="9" cy="9" r="7" fill="none" stroke="#c4c4c4" stroke-width="2.2"/><path d="M14 14l7.5 7.5" stroke="#c4c4c4" stroke-width="2.4"/></svg><div id="caret"></div><span>Find by string, selector, or XPath</span></div>
<svg style="position:absolute;left:833px;top:26px" width="21" height="12" viewBox="0 0 21 12"><path d="M1.2 11L10.5 1.7 19.8 11" fill="none" stroke="#6e6e6e" stroke-width="2.4"/></svg>
<svg style="position:absolute;left:889px;top:26px" width="21" height="12" viewBox="0 0 21 12"><path d="M1.2 1L10.5 10.3 19.8 1" fill="none" stroke="#6e6e6e" stroke-width="2.4"/></svg>
<svg style="position:absolute;left:959px;top:22px" width="21" height="21" viewBox="0 0 21 21"><path d="M1.5 1.5l18 18M19.5 1.5l-18 18" stroke="#c4c4c4" stroke-width="2.4"/></svg>
</div>
<div id="st">
<div class="tab act" style="left:21px;top:12px">Styles</div>
<div id="stul"></div>
<div class="tab" style="left:133px;top:12px">Computed</div>
<div class="tab" style="left:295px;top:12px">Layout</div>
<div class="tab" style="left:414px;top:12px">Event Listeners</div>
<div class="tab" style="left:631px;top:12px">DOM Breakpoints</div>
<svg style="position:absolute;left:862px;top:16px" width="25" height="20" viewBox="0 0 25 20"><path d="M1.5 1.5l8.5 8.5l-8.5 8.5M13.5 1.5l8.5 8.5l-8.5 8.5" fill="none" stroke="#a8a8a8" stroke-width="2.6"/></svg>
</div>
<div id="fb">
<div id="fpill"><svg width="20" height="21" viewBox="0 0 20 21" style="position:absolute;left:22px;top:10px"><path d="M1.2 1.2h17.6L11.5 10v10M8.5 20V10L1.2 1.2" fill="none" stroke="#c4c4c4" stroke-width="2.2" stroke-linejoin="round"/></svg><span>Filter</span></div>
<div class="fbt" style="left:698px">:hov</div>
<div class="fbt" style="left:756px">.cls</div>
<svg style="position:absolute;left:824px;top:13px" width="34" height="33" viewBox="0 0 34 33"><path d="M12 0v25M0 12.5h24" stroke="#c4c4c4" stroke-width="2.6"/><path d="M32 21v11H21z" fill="#c4c4c4"/></svg>
<svg style="position:absolute;left:880px;top:12px" width="25" height="31" viewBox="0 0 25 31"><path d="M2 2h21v14H2z M2 11.5h21" fill="none" stroke="#c4c4c4" stroke-width="2.8"/><path d="M16 2v6" stroke="#c4c4c4" stroke-width="2.8"/><path d="M9 16h7v13a3.5 3.5 0 0 1-7 0z" fill="#c4c4c4"/></svg>
<svg style="position:absolute;left:932px;top:12px" width="30" height="29" viewBox="0 0 30 29"><rect x="1.5" y="1.5" width="27" height="26" rx="2" fill="none" stroke="#c4c4c4" stroke-width="2.6"/><path d="M20 1.5v26" stroke="#c4c4c4" stroke-width="2.6"/><path d="M14 8v13L7 14.5z" fill="#c4c4c4"/></svg>
<div id="fsbtrack"></div><div id="fsb"></div>
</div>
<div id="dr">
<div class="kb" style="left:29px;top:14px"><i></i><i></i><i></i></div>
<div class="tab" style="left:77px;top:14px">Console</div>
<div class="tab act" style="left:211px;top:14px">What's new</div>
<svg style="position:absolute;left:353px;top:20px" width="17" height="17" viewBox="0 0 17 17"><path d="M1 1l15 15M16 1L1 16" stroke="#c4c4c4" stroke-width="2.2"/></svg>
<div id="drul"></div>
<div class="tab" style="left:407px;top:14px">AI assistance</div>
<svg style="position:absolute;left:893px;top:12px" width="29" height="29" viewBox="0 0 29 29"><rect x="1.5" y="1.5" width="26" height="26" rx="2.5" fill="none" stroke="#c4c4c4" stroke-width="2.6"/><path d="M19.5 1.5v26" stroke="#c4c4c4" stroke-width="2.6"/></svg>
<svg style="position:absolute;left:951px;top:16px" width="21" height="21" viewBox="0 0 21 21"><path d="M1.5 1.5l18 18M19.5 1.5l-18 18" stroke="#c4c4c4" stroke-width="2.6"/></svg>
</div>
<div id="wn">
<svg style="position:absolute;left:40.2px;top:32.5px" width="64" height="64" viewBox="0 0 64 64"><circle cx="32" cy="32" r="31.5" fill="#3b66e0"/><circle cx="32" cy="32" r="24.5" fill="none" stroke="#fff" stroke-width="3.2"/><circle cx="32" cy="32" r="10.5" fill="none" stroke="#fff" stroke-width="3.2"/><path d="M32 21.5H55M22.8 37.2L11 17M41 37.5L29 56" stroke="#fff" stroke-width="3.2"/></svg>
<div id="wnt">What's new in DevTools 143</div>
<div id="wnsbtrack"></div><div id="wnsb"></div>
</div>
</div>
</body></html>
